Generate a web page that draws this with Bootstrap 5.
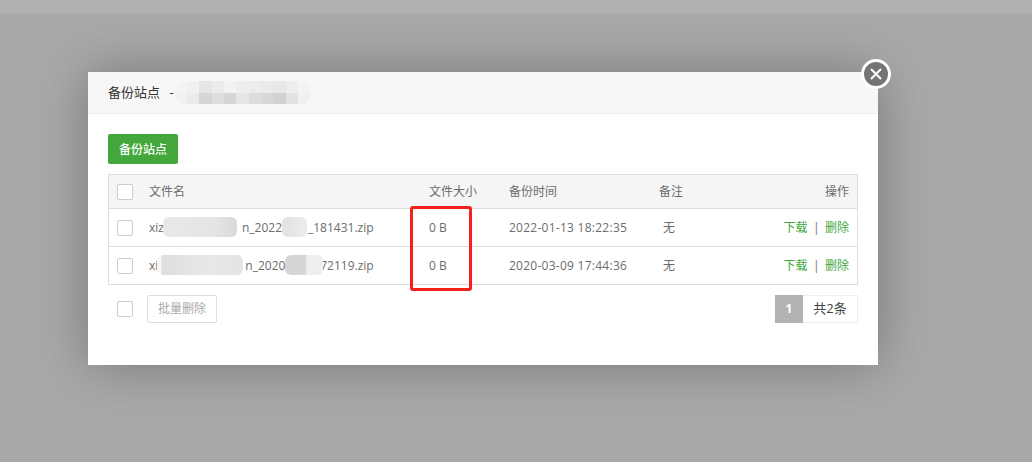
<!DOCTYPE html>
<html lang="zh">

<head>
    <meta charset="UTF-8">
    <title>备份站点</title>
    <link href="https://cdn.jsdelivr.net/npm/bootstrap@5.3.0/dist/css/bootstrap.min.css" rel="stylesheet">
    <style>
        html, body {
            height: 100%;
        }

        body {
            background-color: #a9a9a9;
            font-family: "Open Sans", "Noto Sans CJK SC", sans-serif;
            font-size: 12px;
            color: #6c6c6c;
            overflow: hidden;
        }

        .top-strip {
            height: 13px;
            background-color: #b1b1b1;
        }

        .backup-dialog {
            position: absolute;
            left: 88px;
            top: 72px;
            width: 790px;
            height: 293px;
            background-color: #fff;
            box-shadow: 0 0 50px rgba(0, 0, 0, .3);
        }

        .dialog-head {
            height: 42px;
            padding: 0 20px;
            background-color: #f7f7f7;
            border-bottom: 1px solid #eee;
            font-size: 13px;
            color: #333;
            word-spacing: 6px;
        }

        .title-blur {
            display: grid;
            grid-template-columns: repeat(11, 1fr);
            grid-template-rows: 1fr 1fr;
            width: 136px;
            height: 23px;
            margin-left: 1px;
            overflow: hidden;
            border-radius: 12px;
        }

        .close-round {
            position: absolute;
            right: -13px;
            top: -13px;
            width: 30px;
            height: 30px;
            border: 3px solid #fff;
            border-radius: 50%;
            background-color: #747474;
        }

        .dialog-body {
            padding: 20px;
        }

        .btn-backup {
            width: 70px;
            height: 30px;
            padding: 1px 0 0;
            border: 0;
            border-radius: 2px;
            background-color: #43a73b;
            color: #fff;
            font-size: 12px;
            font-weight: 500;
        }

        .file-list {
            margin-top: 10px;
            border: 1px solid #ddd;
        }

        .file-row {
            display: flex;
            align-items: center;
            height: 38px;
            border-top: 1px solid #ddd;
        }

        .file-row.head-row {
            height: 33px;
            border-top: 0;
            background-color: #f5f5f5;
        }

        .tick-box {
            display: block;
            flex: none;
            width: 16px;
            height: 16px;
            margin: 0 16px 0 8px;
            border: 1px solid #ccc;
            border-radius: 2px;
            background-color: #fff;
        }

        .cell-name {
            width: 280px;
        }

        .cell-size {
            width: 80px;
        }

        .cell-time {
            width: 150px;
        }

        .cell-time.stamp {
            letter-spacing: .26px;
        }

        .cell-note {
            width: 60px;
        }

        .cell-note.plain {
            padding-left: 4px;
        }

        .cell-ops {
            flex: 1;
            padding-right: 8px;
            text-align: right;
        }

        .cell-ops a {
            color: #3fa83b;
            text-decoration: none;
        }

        .op-sep {
            margin: 0 5.5px;
        }

        .name-wrap {
            position: relative;
            display: block;
        }

        .gap-first {
            margin-left: 78px;
        }

        .gap-second {
            margin-left: 87px;
        }

        .tail-first {
            margin-left: 26px;
        }

        .tail-second {
            margin-left: 28px;
        }

        .smudge {
            position: absolute;
            top: -2px;
            height: 20px;
            border-radius: 6px;
        }

        .smudge-a {
            left: 14px;
            width: 74px;
            background: linear-gradient(90deg, #e9e9e9, #e4e4e4 70%, #d9d9d9);
        }

        .smudge-b {
            left: 133px;
            width: 25px;
            background: linear-gradient(90deg, #e2e2e2, #ececec);
        }

        .smudge-c {
            left: 8px;
            width: 86px;
            background: linear-gradient(90deg, #f6f6f6 4px, #dedede 5px, #e8e8e8 60%, #e4e4e4);
        }

        .smudge-d {
            left: 136px;
            width: 38px;
            background: linear-gradient(90deg, #d6d6d6 55%, #eeeeee 55%);
        }

        .list-foot {
            margin-top: 10px;
        }

        .list-foot .tick-box {
            margin: 0 14px 0 9px;
        }

        .btn-batch {
            width: 70px;
            height: 28px;
            padding: 0;
            border: 1px solid #ddd;
            border-radius: 2px;
            background-color: #fff;
            color: #aaa;
            font-size: 12px;
        }

        .page-now {
            display: flex;
            align-items: center;
            justify-content: center;
            width: 28px;
            height: 28px;
            background-color: #b3b3b3;
            color: #fff;
            font-weight: 700;
        }

        .page-total {
            display: flex;
            align-items: center;
            justify-content: center;
            width: 55px;
            height: 28px;
            border: 1px solid #eee;
            border-left: 0;
            color: #444;
            font-size: 13px;
        }

        .red-mark {
            position: absolute;
            left: 322px;
            top: 134px;
            width: 62px;
            height: 85px;
            border: 3px solid #f5201a;
            border-radius: 3px;
        }
    </style>
</head>

<body>
    <div class="top-strip"></div>

    <div class="backup-dialog">
        <div class="dialog-head d-flex align-items-center">
            <span>备份站点 -</span>
            <span class="title-blur" id="titleBlur"></span>
        </div>
        <div class="close-round d-flex align-items-center justify-content-center">
            <svg width="14" height="14" viewBox="0 0 14 14">
                <path d="M2 2 12 12M12 2 2 12" stroke="#fff" stroke-width="2" fill="none" />
            </svg>
        </div>

        <div class="dialog-body">
            <button type="button" class="btn-backup">备份站点</button>

            <div class="file-list">
                <div class="file-row head-row">
                    <span class="tick-box"></span>
                    <span class="cell-name">文件名</span>
                    <span class="cell-size">文件大小</span>
                    <span class="cell-time">备份时间</span>
                    <span class="cell-note">备注</span>
                    <span class="cell-ops">操作</span>
                </div>
                <div class="file-row">
                    <span class="tick-box"></span>
                    <span class="cell-name">
                        <span class="name-wrap">xiz<span class="smudge smudge-a"></span><span class="smudge smudge-b"></span><span class="gap-first">n_2022</span><span class="tail-first">_181431.zip</span></span>
                    </span>
                    <span class="cell-size">0 B</span>
                    <span class="cell-time stamp">2022-01-13 18:22:35</span>
                    <span class="cell-note plain">无</span>
                    <span class="cell-ops"><a href="#">下载</a><span class="op-sep">|</span><a href="#">删除</a></span>
                </div>
                <div class="file-row">
                    <span class="tick-box"></span>
                    <span class="cell-name">
                        <span class="name-wrap">xi<span class="smudge smudge-c"></span><span class="smudge smudge-d"></span><span class="gap-second">n_20200</span><span class="tail-second">72119.zip</span></span>
                    </span>
                    <span class="cell-size">0 B</span>
                    <span class="cell-time stamp">2020-03-09 17:44:36</span>
                    <span class="cell-note plain">无</span>
                    <span class="cell-ops"><a href="#">下载</a><span class="op-sep">|</span><a href="#">删除</a></span>
                </div>
            </div>

            <div class="list-foot d-flex align-items-center">
                <span class="tick-box"></span>
                <button type="button" class="btn-batch">批量删除</button>
                <div class="d-flex ms-auto">
                    <span class="page-now">1</span>
                    <span class="page-total">共2条</span>
                </div>
            </div>
        </div>

        <div class="red-mark" aria-hidden="true"></div>
    </div>

    <script src="https://cdn.jsdelivr.net/npm/bootstrap@5.3.0/dist/js/bootstrap.bundle.min.js"></script>
    <script>
        // mosaic behind the site name, two rows of cells
        const shades = [
            '#f3f3f3', '#f0f0f0', '#e6e6e6', '#ececec', '#f2f2f2', '#eeeeee', '#ececec', '#eaeaea', '#e8e8e8', '#eeeeee', '#f3f3f3',
            '#f1f1f1', '#ebebeb', '#d6d6d6', '#dedede', '#d6d6d6', '#e6e6e6', '#dcdcdc', '#d8d8d8', '#d2d2d2', '#e2e2e2', '#f0f0f0'
        ];
        const blur = document.getElementById('titleBlur');
        shades.forEach(c => {
            const cell = document.createElement('i');
            cell.style.backgroundColor = c;
            blur.appendChild(cell);
        });
    </script>
</body>

</html>
